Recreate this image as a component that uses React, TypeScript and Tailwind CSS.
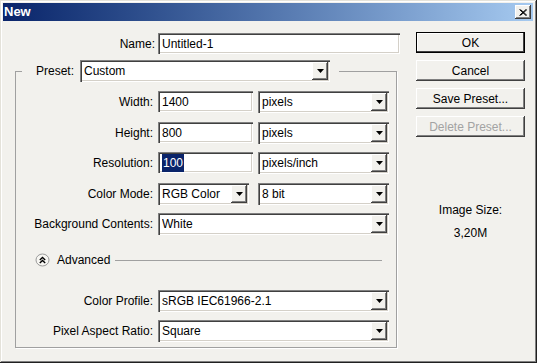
import type { ReactNode } from 'react'

const sunken = 'shadow-[inset_1px_1px_#808080,inset_2px_2px_#404040,inset_-1px_-1px_#ffffff,inset_-2px_-2px_#d4d0c8]'
const raised = 'shadow-[inset_-1px_-1px_#404040,inset_1px_1px_#ffffff,inset_-2px_-2px_#808080]'

function Field({ children, className = '' }: { children?: ReactNode; className?: string }) {
  return (
    <div className={`flex h-[21px] items-center bg-white pl-[4px] ${sunken} ${className}`}>
      {children}
    </div>
  )
}

function Select({ value, className = '' }: { value: string; className?: string }) {
  return (
    <div className={`flex h-[22px] items-center bg-white pl-[4px] ${sunken} ${className}`}>
      <span className="flex-1 truncate">{value}</span>
      <div className={`mr-[2px] flex h-[18px] w-[16px] items-center justify-center bg-[#f2f1ed] ${raised}`}>
        <svg width="7" height="4" viewBox="0 0 7 4">
          <polygon points="0,0 7,0 3.5,4" fill="#000" />
        </svg>
      </div>
    </div>
  )
}

function Row({ label, className = '', children }: { label: string; className?: string; children: ReactNode }) {
  return (
    <div className={`flex items-center ${className}`}>
      <span className="w-[139px] pr-[2px] text-right">{label}</span>
      <div className="ml-[3px] flex gap-[5px]">{children}</div>
    </div>
  )
}

function Button({ label, primary, disabled }: { label: string; primary?: boolean; disabled?: boolean }) {
  return (
    <button
      className={`flex h-[21px] w-[109px] items-center justify-center bg-[#f2f1ed] ${
        primary ? 'border border-black shadow-[inset_-1px_-1px_#404040,inset_1px_1px_#ffffff]' : raised
      } ${disabled ? 'text-[#a3a3a3]' : 'text-black'}`}
    >
      {label}
    </button>
  )
}

export default function App() {
  return (
    <div className="flex h-[363px] w-[537px] flex-col bg-[#f2f1ed] pb-[3px] pl-[3px] pr-[4px] pt-[3px] font-['Liberation_Sans',Arial,sans-serif] text-[12px] text-black shadow-[inset_-1px_-1px_#202020,inset_1px_1px_#e4e2da,inset_-2px_-2px_#808080,inset_2px_2px_#ffffff]">
      {/* Title bar */}
      <div className="flex h-[18px] items-center justify-between bg-gradient-to-r from-[#0a246a] to-[#a6caf0] pl-[1px] pr-[2px]">
        <span className="text-[13px] font-bold text-white">New</span>
        <button className={`flex h-[14px] w-[16px] items-center justify-center bg-[#f2f1ed] ${raised}`}>
          <svg width="8" height="7" viewBox="0 0 8 7">
            <path d="M0.5 0.5 L7 6.5 M1.5 0.5 L8 6.5 M7 0.5 L0.5 6.5 M8 0.5 L1.5 6.5" stroke="#000" strokeWidth="1" />
          </svg>
        </button>
      </div>

      <div className="flex pl-[12px] pt-[12px]">
        {/* Form */}
        <div className="flex w-[385px] flex-col">
          <div className="flex items-center">
            <span className="w-[140px] text-right">Name:</span>
            <Field className="ml-[3px] w-[242px] h-[20px]">Untitled-1</Field>
          </div>

          <fieldset className="mt-[6px] w-[382px] border border-[#a0a0a0] pb-[5px] pt-[9px] shadow-[1px_1px_0_#ffffff]">
            <legend className="ml-[6px] flex items-center pl-[14px] pr-[9px]">
              <span>Preset:</span>
              <Select value="Custom" className="ml-[6px] w-[250px]" />
            </legend>

            <Row label="Width:">
              <Field className="w-[95px]">1400</Field>
              <Select value="pixels" className="w-[131px]" />
            </Row>
            <Row label="Height:" className="mt-[9px]">
              <Field className="w-[95px]">800</Field>
              <Select value="pixels" className="w-[131px]" />
            </Row>
            <Row label="Resolution:" className="mt-[8px]">
              <Field className="w-[95px] pl-[3px]">
                <span className="bg-[#0a246a] px-[1px] text-white">100</span>
              </Field>
              <Select value="pixels/inch" className="w-[131px]" />
            </Row>
            <Row label="Color Mode:" className="mt-[9px]">
              <Select value="RGB Color" className="mr-[4px] w-[91px]" />
              <Select value="8 bit" className="w-[131px]" />
            </Row>
            <Row label="Background Contents:" className="mt-[8px]">
              <Select value="White" className="w-[231px]" />
            </Row>

            {/* Advanced */}
            <div className="mt-[18px] flex h-[14px] items-center pl-[19px]">
              <svg width="15" height="14" viewBox="0 0 15 14">
                <ellipse cx="7.5" cy="7" rx="6.5" ry="6" fill="#f7f6f2" stroke="#9a9a9a" />
                <path d="M4.8 7 L7.5 4.5 L10.2 7 M4.8 10 L7.5 7.5 L10.2 10" fill="none" stroke="#000" strokeWidth="1.4" />
              </svg>
              <span className="ml-[7px]">Advanced</span>
              <div className="ml-[5px] mr-[14px] h-px flex-1 bg-[#a0a0a0]" />
            </div>

            <Row label="Color Profile:" className="mt-[23px]">
              <Select value="sRGB IEC61966-2.1" className="w-[231px]" />
            </Row>
            <Row label="Pixel Aspect Ratio:" className="mt-[8px]">
              <Select value="Square" className="w-[231px]" />
            </Row>
          </fieldset>
        </div>

        {/* Buttons */}
        <div className="-mt-px ml-[16px] flex w-[109px] flex-col">
          <div className="flex flex-col gap-[7px]">
            <Button label="OK" primary />
            <Button label="Cancel" />
            <Button label="Save Preset..." />
            <Button label="Delete Preset..." disabled />
          </div>
          <div className="mt-[64px] text-center">Image Size:</div>
          <div className="mt-[5px] text-center">3,20M</div>
        </div>
      </div>
    </div>
  )
}
